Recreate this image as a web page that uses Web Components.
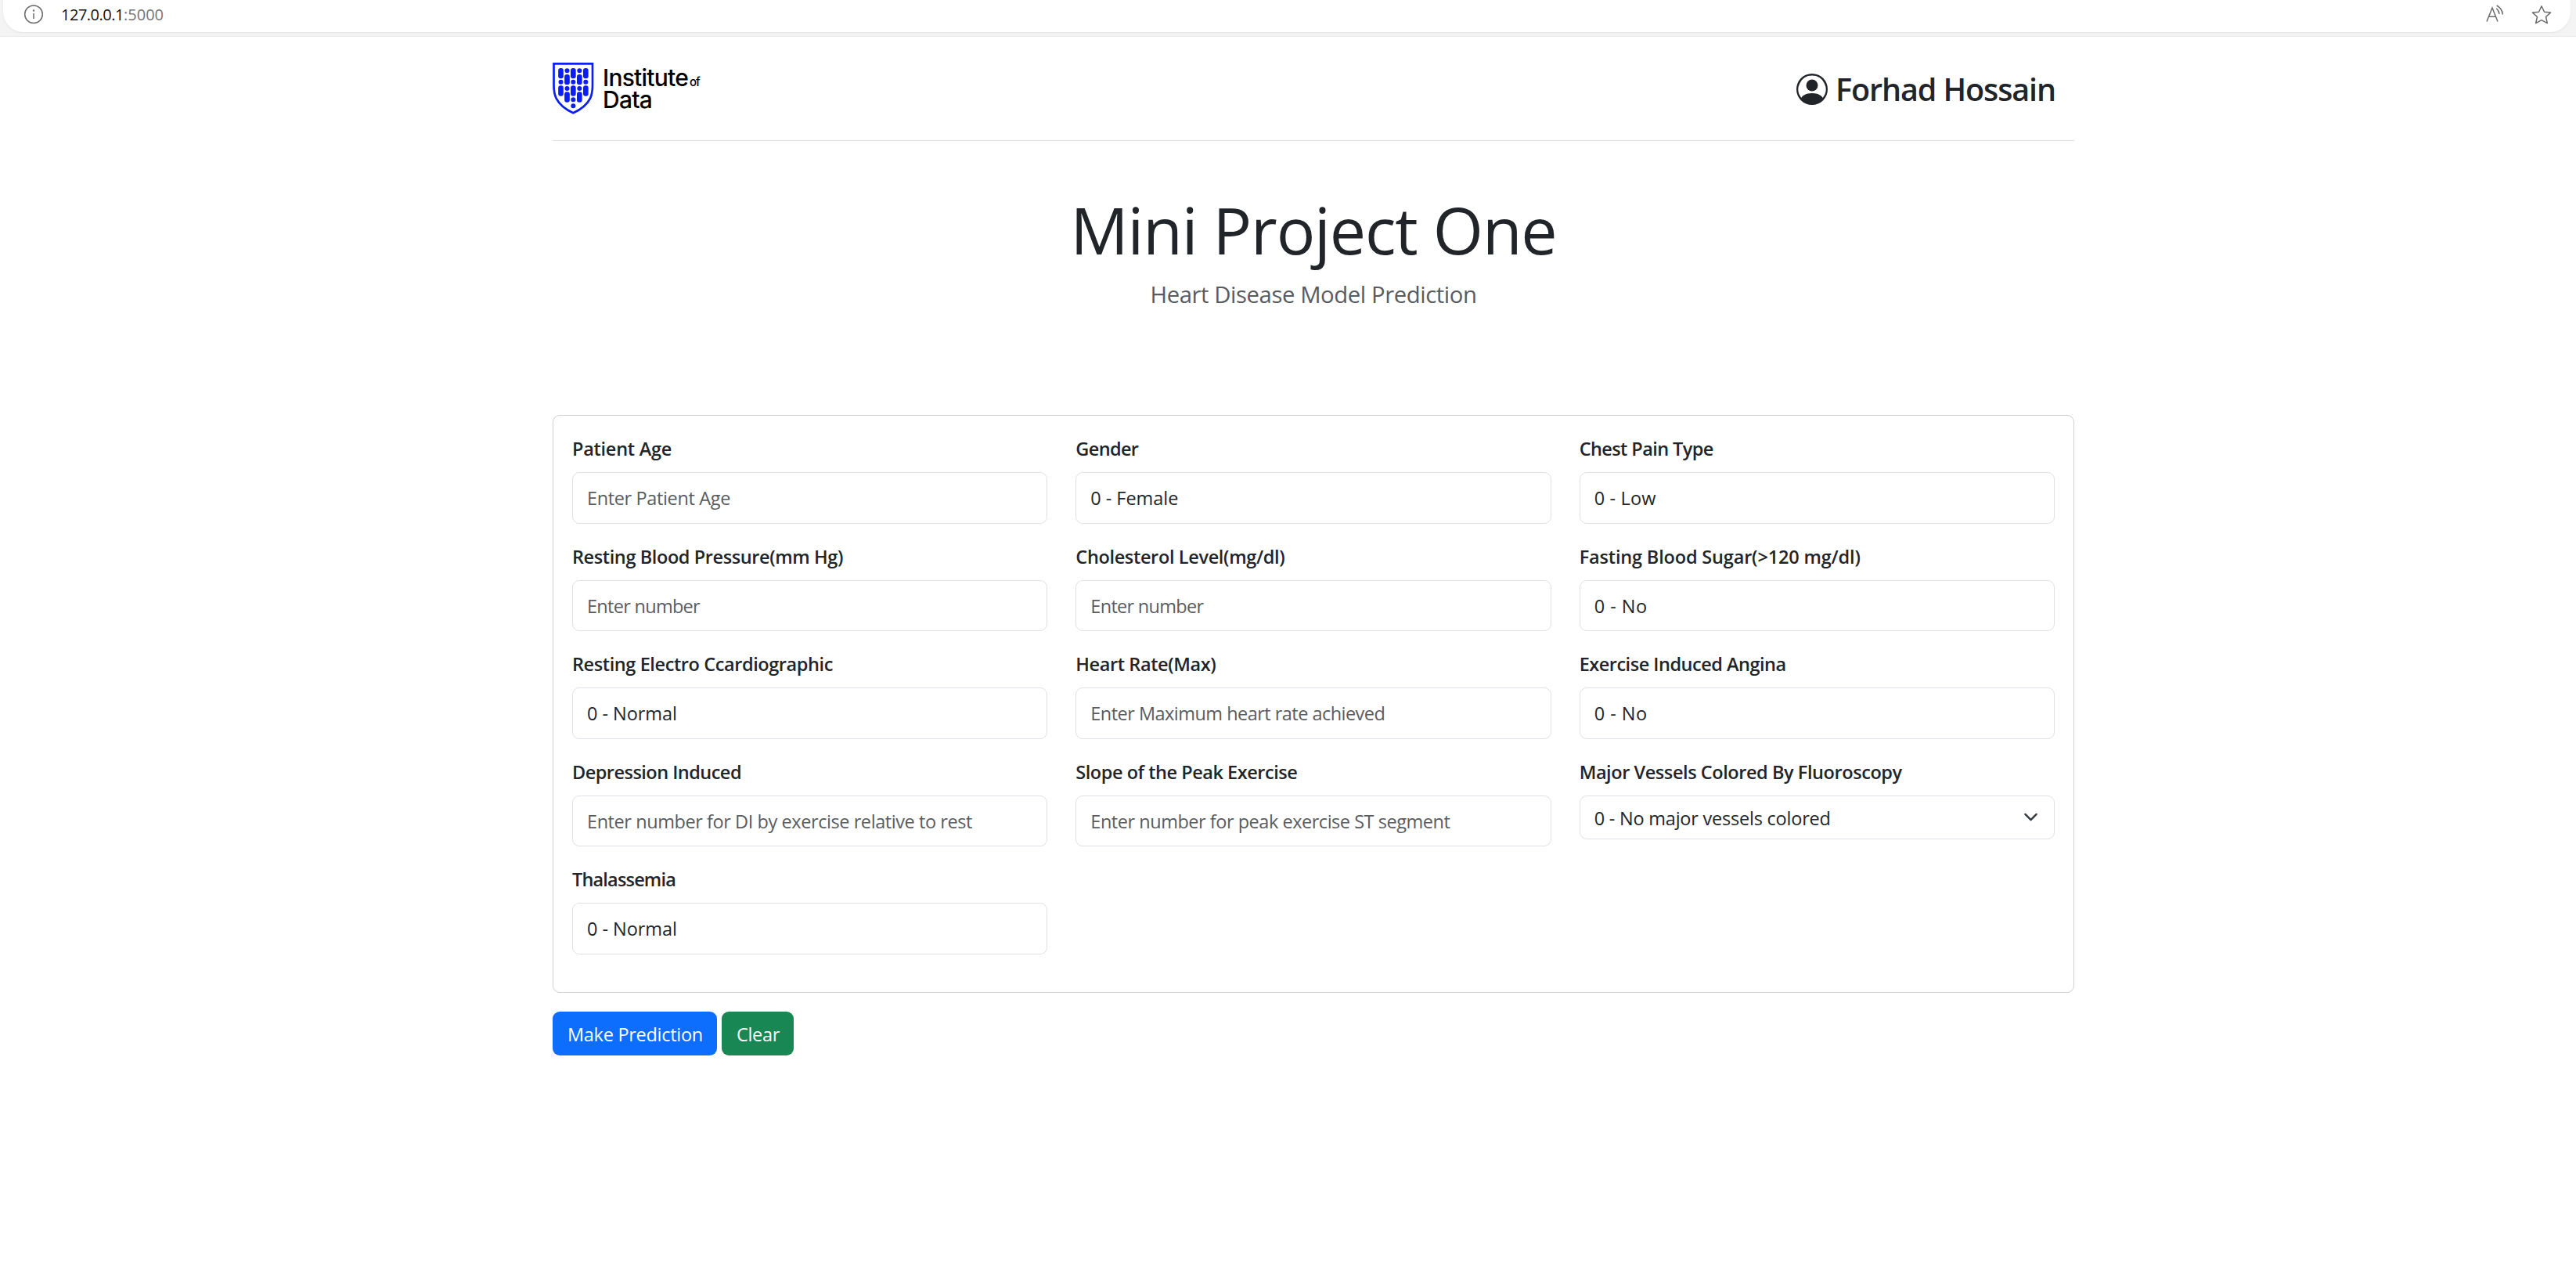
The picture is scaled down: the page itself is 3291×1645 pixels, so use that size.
<!DOCTYPE html>
<html lang="en">
<head>
<meta charset="utf-8">
<title>Mini Project One</title>
<style>
  html, body { margin: 0; background: #fff; }
  body { font-family: "Open Sans", "Noto Sans", sans-serif; font-size: 23.5px; line-height: 36px; color: #212529; }
</style>
</head>
<body>
<browser-bar></browser-bar>
<page-shell>
  <site-header></site-header>
  <page-hero></page-hero>
  <form-card>
    <form-field label="Patient Age" lw="127" vw="183" hint>Enter Patient Age</form-field>
    <form-field label="Gender" lw="80" vw="112">0 - Female</form-field>
    <form-field label="Chest Pain Type" lw="171" vw="79">0 - Low</form-field>
    <form-field label="Resting Blood Pressure(mm Hg)" lw="346" vw="144" hint>Enter number</form-field>
    <form-field label="Cholesterol Level(mg/dl)" lw="267" vw="144" hint>Enter number</form-field>
    <form-field label="Fasting Blood Sugar(&gt;120 mg/dl)" lw="359" vw="68">0 - No</form-field>
    <form-field label="Resting Electro Ccardiographic" lw="333" vw="115">0 - Normal</form-field>
    <form-field label="Heart Rate(Max)" lw="179" vw="376" hint>Enter Maximum heart rate achieved</form-field>
    <form-field label="Exercise Induced Angina" lw="264" vw="68">0 - No</form-field>
    <form-field label="Depression Induced" lw="216" vw="492" hint>Enter number for DI by exercise relative to rest</form-field>
    <form-field label="Slope of the Peak Exercise" lw="283" vw="459" hint>Enter number for peak exercise ST segment</form-field>
    <form-field label="Major Vessels Colored By Fluoroscopy" lw="412" vw="302" select>0 - No major vessels colored</form-field>
    <form-field label="Thalassemia" lw="132" vw="115">0 - Normal</form-field>
  </form-card>
  <action-row>
    <action-button style="--bg:#0d6efd;width:210px"><fit-text w="173">Make Prediction</fit-text></action-button>
    <action-button style="--bg:#198754;width:92px"><fit-text w="55">Clear</fit-text></action-button>
  </action-row>
</page-shell>
<script>
const define = (name, html, setup) => customElements.define(name, class extends HTMLElement {
  connectedCallback() {
    if (this.shadowRoot) return;
    const t = document.createElement('template');
    t.innerHTML = html;
    this.attachShadow({ mode: 'open' }).appendChild(t.content.cloneNode(true));
    if (setup) setup(this, this.shadowRoot);
  }
});

define('browser-bar', `
<style>
  :host { display: block; box-sizing: border-box; height: 47px; background: #f4f4f4; border-bottom: 1px solid #e9e9e9; padding: 0 7px 0 4px; }
  .pill { box-sizing: border-box; height: 41px; background: #fff; border-radius: 0 0 26px 26px; display: flex; align-items: flex-start; padding: 0 24px 0 26px; box-shadow: 0 1px 3px #e4e4e4; }
  .info { margin: 5px 21px 0 0; }
  .url { font-size: 20px; line-height: 28px; margin-top: 5px; color: #111; display: flex; }
  .port { color: #757575; }
  .tools { margin-left: auto; display: flex; gap: 34px; margin-top: 5px; }
  svg { display: block; flex: none; fill: none; stroke: #6b6b6b; stroke-width: 1.5; }
</style>
<div class="pill">
  <svg class="info" width="27" height="27" viewBox="0 0 27 27"><circle cx="13" cy="13.3" r="11.3"/><path d="M13 12v7"/><circle cx="13" cy="8.6" r=".5"/></svg>
  <div class="url"><fit-text w="80">127.0.0.1</fit-text><fit-text class="port" w="51">:5000</fit-text></div>
  <div class="tools">
    <svg width="24" height="26" viewBox="0 0 24 26"><path d="M1 22.5 8 5l7 17.500M3.500 16.300h9M13.300 5.800q3.200 2.700 3.700 7M13.700 2q7 3.700 7.600 11.500"/></svg>
    <svg width="26" height="26" viewBox="0 0 26 26"><path stroke-linejoin="round" d="m13 2.700 3.500 7.500 8 .9-6 5.400 1.800 8.200-7.300-4-7.300 4 1.800-8.200-6-5.400 8-.9z"/></svg>
  </div>
</div>`);

define('page-shell', `
<style>:host { display: flex; flex-direction: column; width: 1944px; margin-left: 706px; }</style><slot></slot>`);

/* Tunes letter spacing so a run of text takes the advance width given in "w". */
define('fit-text', `
<style>:host { display: inline-block; white-space: nowrap; } span { display: inline-block; white-space: nowrap; }</style><span><slot></slot></span>`,
(host, root) => {
  const s = root.querySelector('span');
  requestAnimationFrame(() => {
    const n = host.textContent.length, w = parseFloat(host.getAttribute('w'));
    s.style.letterSpacing = ((w - s.getBoundingClientRect().width) / n).toFixed(3) + 'px';
  });
});

define('brand-logo', `
<style>
  :host { display: flex; align-items: flex-start; color: #000; font: 500 30px/28px Inter, sans-serif; }
  svg { display: block; margin-right: 11px; }
  .words { display: flex; flex-direction: column; padding-top: 5px; }
  .line { display: flex; align-items: baseline; height: 28px; }
  .of { font-size: 15px; line-height: 15px; margin-left: 2px; }
</style>
<svg width="53" height="66" viewBox="48 60 159 198" fill="#0a1ff0">
  <path d="M52.500 64H201v84q0 30-9 49-17 34-65 56-48-22-65-56-9.500-19-9.500-49z" fill="none" stroke="#0a1ff0" stroke-width="8"/>
  <g><rect x="69.500" y="81" width="20" height="40" rx="9"/><circle cx="79.500" cy="134.500" r="9"/><rect x="69.500" y="148" width="20" height="40" rx="9"/></g>
  <g><circle cx="103.500" cy="91" r="9"/><rect x="93.500" y="105" width="20" height="40" rx="9"/><circle cx="103.500" cy="159" r="9"/><rect x="93.500" y="172" width="20" height="40" rx="9"/></g>
  <g><rect x="117" y="81" width="20" height="40" rx="9"/><circle cx="127" cy="134.500" r="9"/><rect x="117" y="148" width="20" height="40" rx="9"/><circle cx="127" cy="202" r="9"/><circle cx="127" cy="226" r="9"/></g>
  <g><circle cx="151" cy="91" r="9"/><rect x="141" y="105" width="20" height="40" rx="9"/><circle cx="151" cy="159" r="9"/><rect x="141" y="172" width="20" height="40" rx="9"/></g>
  <g><rect x="165" y="81" width="20" height="40" rx="9"/><circle cx="175" cy="134.500" r="9"/><rect x="165" y="148" width="20" height="40" rx="9"/></g>
</svg>
<div class="words">
  <div class="line"><fit-text w="109">Institute</fit-text><fit-text class="of" w="12.500">of</fit-text></div>
  <div class="line"><fit-text w="63">Data</fit-text></div>
</div>`);

define('site-header', `
<style>
  :host { display: flex; justify-content: space-between; box-sizing: border-box; height: 133px; padding: 33px 24px 0 0; border-bottom: 1px solid #dee2e6; }
  .user { display: flex; align-items: flex-start; gap: 10px; font-size: 39.500px; font-weight: 600; line-height: 48px; padding-top: 10px; }
  svg { display: block; width: 40px; height: 40px; margin-top: 4px; }
</style>
<brand-logo></brand-logo>
<div class="user">
  <svg viewBox="0 0 16 16" fill="#212529"><path d="M11 6a3 3 0 1 1-6 0 3 3 0 0 1 6 0"/><path fill-rule="evenodd" d="M0 8a8 8 0 1 1 16 0A8 8 0 0 1 0 8m8-7a7 7 0 0 0-5.468 11.370C3.242 11.226 4.805 10 8 10s4.757 1.225 5.468 2.370A7 7 0 0 0 8 1"/></svg>
  <fit-text w="281">Forhad Hossain</fit-text>
</div>`);

define('page-hero', `
<style>
  :host { display: flex; flex-direction: column; align-items: center; box-sizing: border-box; height: 350px; padding-top: 63px; }
  .title { font-size: 82.500px; line-height: 101px; }
  .sub { font-size: 29.300px; line-height: 45px; margin-top: 10px; color: #585c5f; }
</style>
<div class="title"><fit-text w="621">Mini Project One</fit-text></div>
<div class="sub"><fit-text w="417">Heart Disease Model Prediction</fit-text></div>`);

define('form-card', `
<style>
  :host { display: grid; box-sizing: border-box; grid-template-columns: repeat(3, 1fr); gap: 24px 36px; align-items: start; border: 1px solid #ced0d2; border-radius: 9px; padding: 24px 24px 48px; height: 738px; grid-auto-rows: 113.500px; }
</style><slot></slot>`);

define('form-field', `
<style>
  :host { display: flex; flex-direction: column; gap: 12px; }
  .label { box-sizing: border-box; font-weight: 600; line-height: 35px; height: 36px; padding-top: 1px; }
  .box { box-sizing: border-box; height: 65.500px; border: 1px solid #dee2e6; border-radius: 9px; padding: 1px 20px 0 18px; display: flex; align-items: center; justify-content: space-between; }
  :host([hint]) .box { color: #595c5f; }
  :host([select]) .box { height: 56px; padding-top: 2px; }
  svg { display: none; width: 19px; height: 19px; margin-top: -3px; }
  :host([select]) svg { display: block; }
</style>
<div class="label"><fit-text class="l"></fit-text></div>
<div class="box"><fit-text class="v"></fit-text><svg viewBox="0 0 16 16" fill="none" stroke="#343a40" stroke-width="2" stroke-linecap="round" stroke-linejoin="round"><path d="m2 5 6 6 6-6"/></svg></div>`,
(host, root) => {
  const l = root.querySelector('.l'), v = root.querySelector('.v');
  l.setAttribute('w', host.getAttribute('lw'));
  l.textContent = host.getAttribute('label');
  v.setAttribute('w', host.getAttribute('vw'));
  v.textContent = host.textContent;
});

define('action-row', `
<style>:host { display: flex; gap: 6px; margin-top: 24px; }</style><slot></slot>`);

define('action-button', `
<style>:host { display: flex; align-items: center; justify-content: center; box-sizing: border-box; height: 56px; padding: 2px 0 0 1px; border-radius: 9px; background: var(--bg); color: #fff; }</style><slot></slot>`);
</script>
</body>
</html>
